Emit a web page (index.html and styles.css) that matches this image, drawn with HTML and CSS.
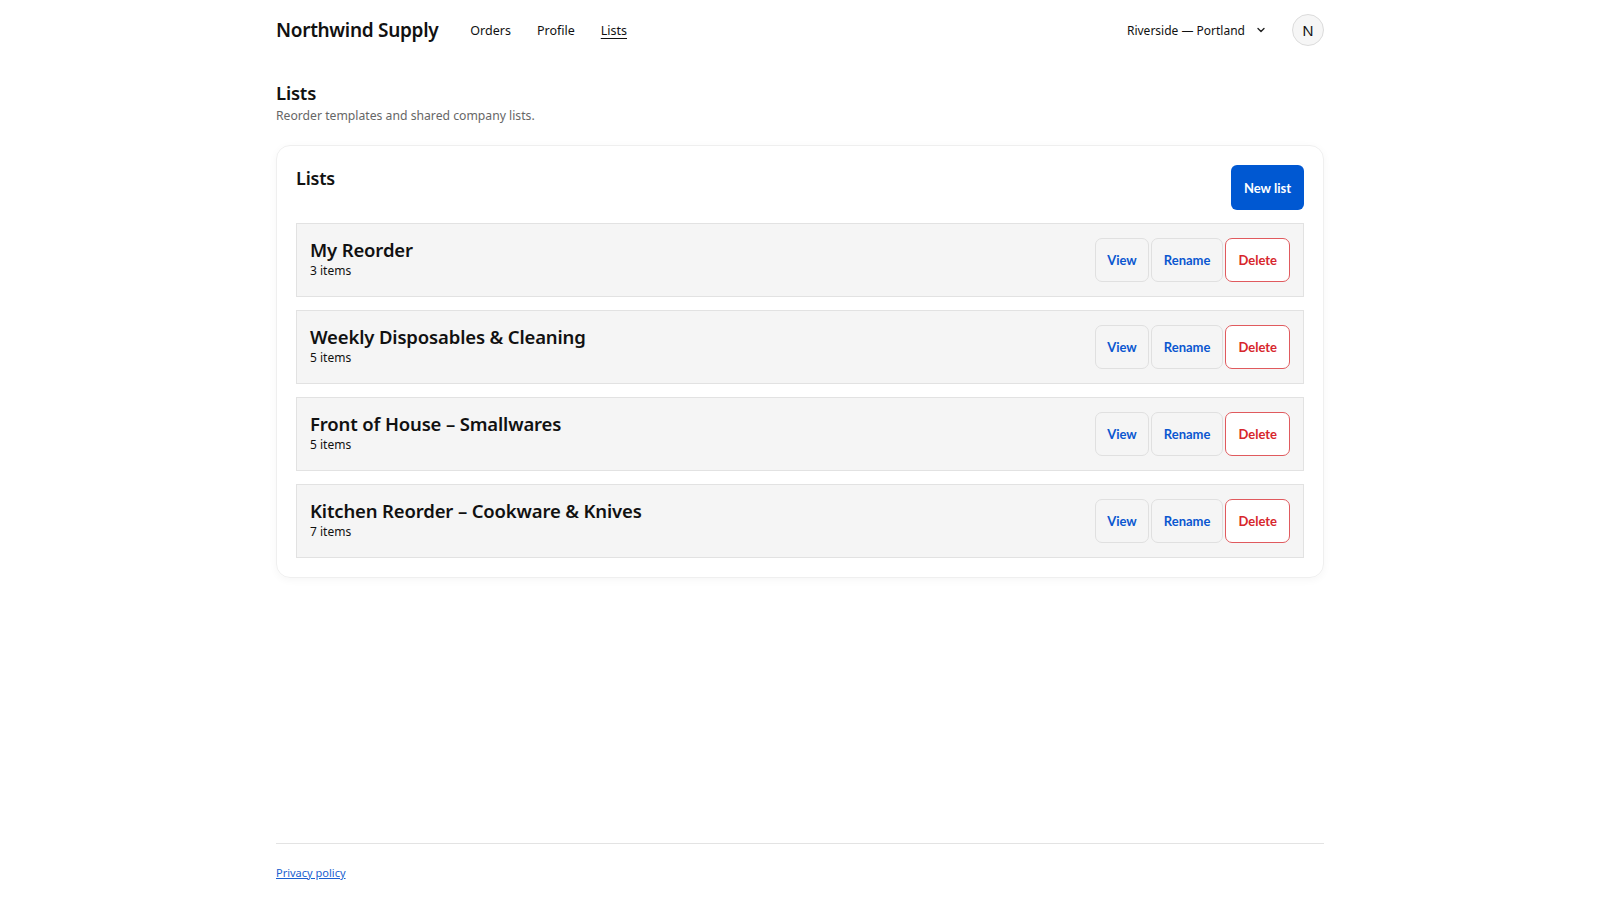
FILE: index.html
```html
<!DOCTYPE html>
<html>
<head>
    <title>Lists - Northwind Supply</title>
    <link rel="stylesheet" href="styles.css">
</head>

<body>
    <header class="top_bar">
        <div class="wrap top_inner">
            <div class="brand_nav">
                <a class="brand" href="#">Northwind Supply</a>
                <nav class="main_nav">
                    <a href="#">Orders</a>
                    <a href="#">Profile</a>
                    <a class="active" href="#">Lists</a>
                </nav>
            </div>
            <div class="account">
                <button class="location">
                    Riverside — Portland
                    <svg width="10" height="10" viewBox="0 0 10 10"><path d="M2 3.5 L5 6.5 L8 3.5" fill="none" stroke="#222" stroke-width="1.4" stroke-linecap="round" stroke-linejoin="round"/></svg>
                </button>
                <div class="avatar">N</div>
            </div>
        </div>
    </header>

    <main class="wrap page">
        <h1 class="page_title">Lists</h1>
        <p class="page_sub">Reorder templates and shared company lists.</p>

        <section class="card">
            <div class="card_head">
                <h2>Lists</h2>
                <button class="btn_primary">New list</button>
            </div>

            <div class="list_rows">
                <div class="list_row">
                    <div class="row_text">
                        <div class="row_name">My Reorder</div>
                        <div class="row_count">3 items</div>
                    </div>
                    <div class="row_actions">
                        <button class="btn_plain">View</button>
                        <button class="btn_plain">Rename</button>
                        <button class="btn_danger">Delete</button>
                    </div>
                </div>
                <div class="list_row">
                    <div class="row_text">
                        <div class="row_name">Weekly Disposables &amp; Cleaning</div>
                        <div class="row_count">5 items</div>
                    </div>
                    <div class="row_actions">
                        <button class="btn_plain">View</button>
                        <button class="btn_plain">Rename</button>
                        <button class="btn_danger">Delete</button>
                    </div>
                </div>
                <div class="list_row">
                    <div class="row_text">
                        <div class="row_name">Front of House – Smallwares</div>
                        <div class="row_count">5 items</div>
                    </div>
                    <div class="row_actions">
                        <button class="btn_plain">View</button>
                        <button class="btn_plain">Rename</button>
                        <button class="btn_danger">Delete</button>
                    </div>
                </div>
                <div class="list_row">
                    <div class="row_text">
                        <div class="row_name">Kitchen Reorder – Cookware &amp; Knives</div>
                        <div class="row_count">7 items</div>
                    </div>
                    <div class="row_actions">
                        <button class="btn_plain">View</button>
                        <button class="btn_plain">Rename</button>
                        <button class="btn_danger">Delete</button>
                    </div>
                </div>
            </div>
        </section>
    </main>

    <footer class="wrap foot">
        <a href="#">Privacy policy</a>
    </footer>
</body>
</html>
```

FILE: styles.css
```css
body{
    margin: 0;
    min-height: 100vh;
    display: flex;
    flex-direction: column;
    font-family: "Noto Sans", "Open Sans", sans-serif;
    color: #111;
    background-color: #fff;
}
a{color: inherit; text-decoration: none;}
button{font-family: Lato, sans-serif; cursor: pointer;}

.wrap{
    width: 1048px;
    margin: 0 auto;
    box-sizing: border-box;
}

/* top bar */
.top_inner{
    height: 60px;
    display: flex;
    align-items: center;
    justify-content: space-between;
}
.brand_nav{
    display: flex;
    align-items: center;
    gap: 32px;
}
.brand{
    font-size: 19px;
    font-weight: 600;
    letter-spacing: -0.3px;
}
.main_nav{
    display: flex;
    gap: 26px;
    font-size: 12.5px;
}
.main_nav .active{text-decoration: underline; text-underline-offset: 3px;}
.account{
    display: flex;
    align-items: center;
    gap: 26px;
}
.location{
    display: flex;
    align-items: center;
    gap: 11px;
    border: none;
    background: none;
    padding: 0;
    font-family: "Noto Sans", sans-serif;
    font-size: 12px;
    color: #111;
}
.avatar{
    width: 30px;
    height: 30px;
    border-radius: 50%;
    border: 1px solid #dcdcdc;
    background-color: #f6f6f6;
    display: flex;
    align-items: center;
    justify-content: center;
    font-size: 15px;
}

/* page */
.page{
    padding-top: 19px;
    padding-bottom: 40px;
}
.page_title{
    margin: 0;
    font-size: 18.5px;
    line-height: 28px;
    font-weight: 600;
    letter-spacing: -0.2px;
}
.page_sub{
    margin: 0;
    font-size: 12.2px;
    line-height: 18px;
    color: #666;
}

.card{
    margin-top: 20px;
    padding: 19px;
    border: 1px solid #efefef;
    border-radius: 14px;
    box-shadow: 0 2px 8px rgba(0, 0, 0, 0.04);
}
.card_head{
    display: flex;
    justify-content: space-between;
    align-items: flex-start;
}
.card_head h2{
    margin: 0;
    font-size: 18px;
    line-height: 27px;
    font-weight: 600;
    letter-spacing: -0.2px;
}
.btn_primary{
    height: 45px;
    padding: 0 13px;
    border: none;
    border-radius: 6px;
    background-color: #0058d2;
    color: #fff;
    font-size: 13px;
    font-weight: 700;
}

.list_rows{
    margin-top: 13px;
    display: flex;
    flex-direction: column;
    gap: 13px;
}
.list_row{
    display: flex;
    justify-content: space-between;
    align-items: center;
    padding: 14px 13px;
    background-color: #f5f5f5;
    border: 1px solid #e2e2e2;
}
.row_text{padding-bottom: 2px;}
.row_name{
    font-size: 18.5px;
    line-height: 24px;
    font-weight: 600;
    letter-spacing: -0.15px;
}
.row_count{
    font-size: 12px;
    line-height: 18px;
}
.row_actions{
    display: flex;
    gap: 2px;
}
.btn_plain, .btn_danger{
    height: 44px;
    padding: 0 12px;
    border-radius: 7px;
    font-size: 13px;
    font-weight: 700;
}
.btn_plain{
    border: 1px solid #e0e0e0;
    background-color: #f5f5f5;
    color: #0b57d0;
}
.btn_plain:first-child{padding: 0 11px;}
.btn_danger{
    border: 1px solid #e05a5e;
    background-color: #fff;
    color: #d7262c;
}

/* footer */
.foot{
    margin-top: auto;
    border-top: 1px solid #e3e3e3;
    padding: 20px 0 18px;
    font-size: 11px;
    line-height: 18px;
}
.foot a{color: #1a5fd0; text-decoration: underline;}
```
